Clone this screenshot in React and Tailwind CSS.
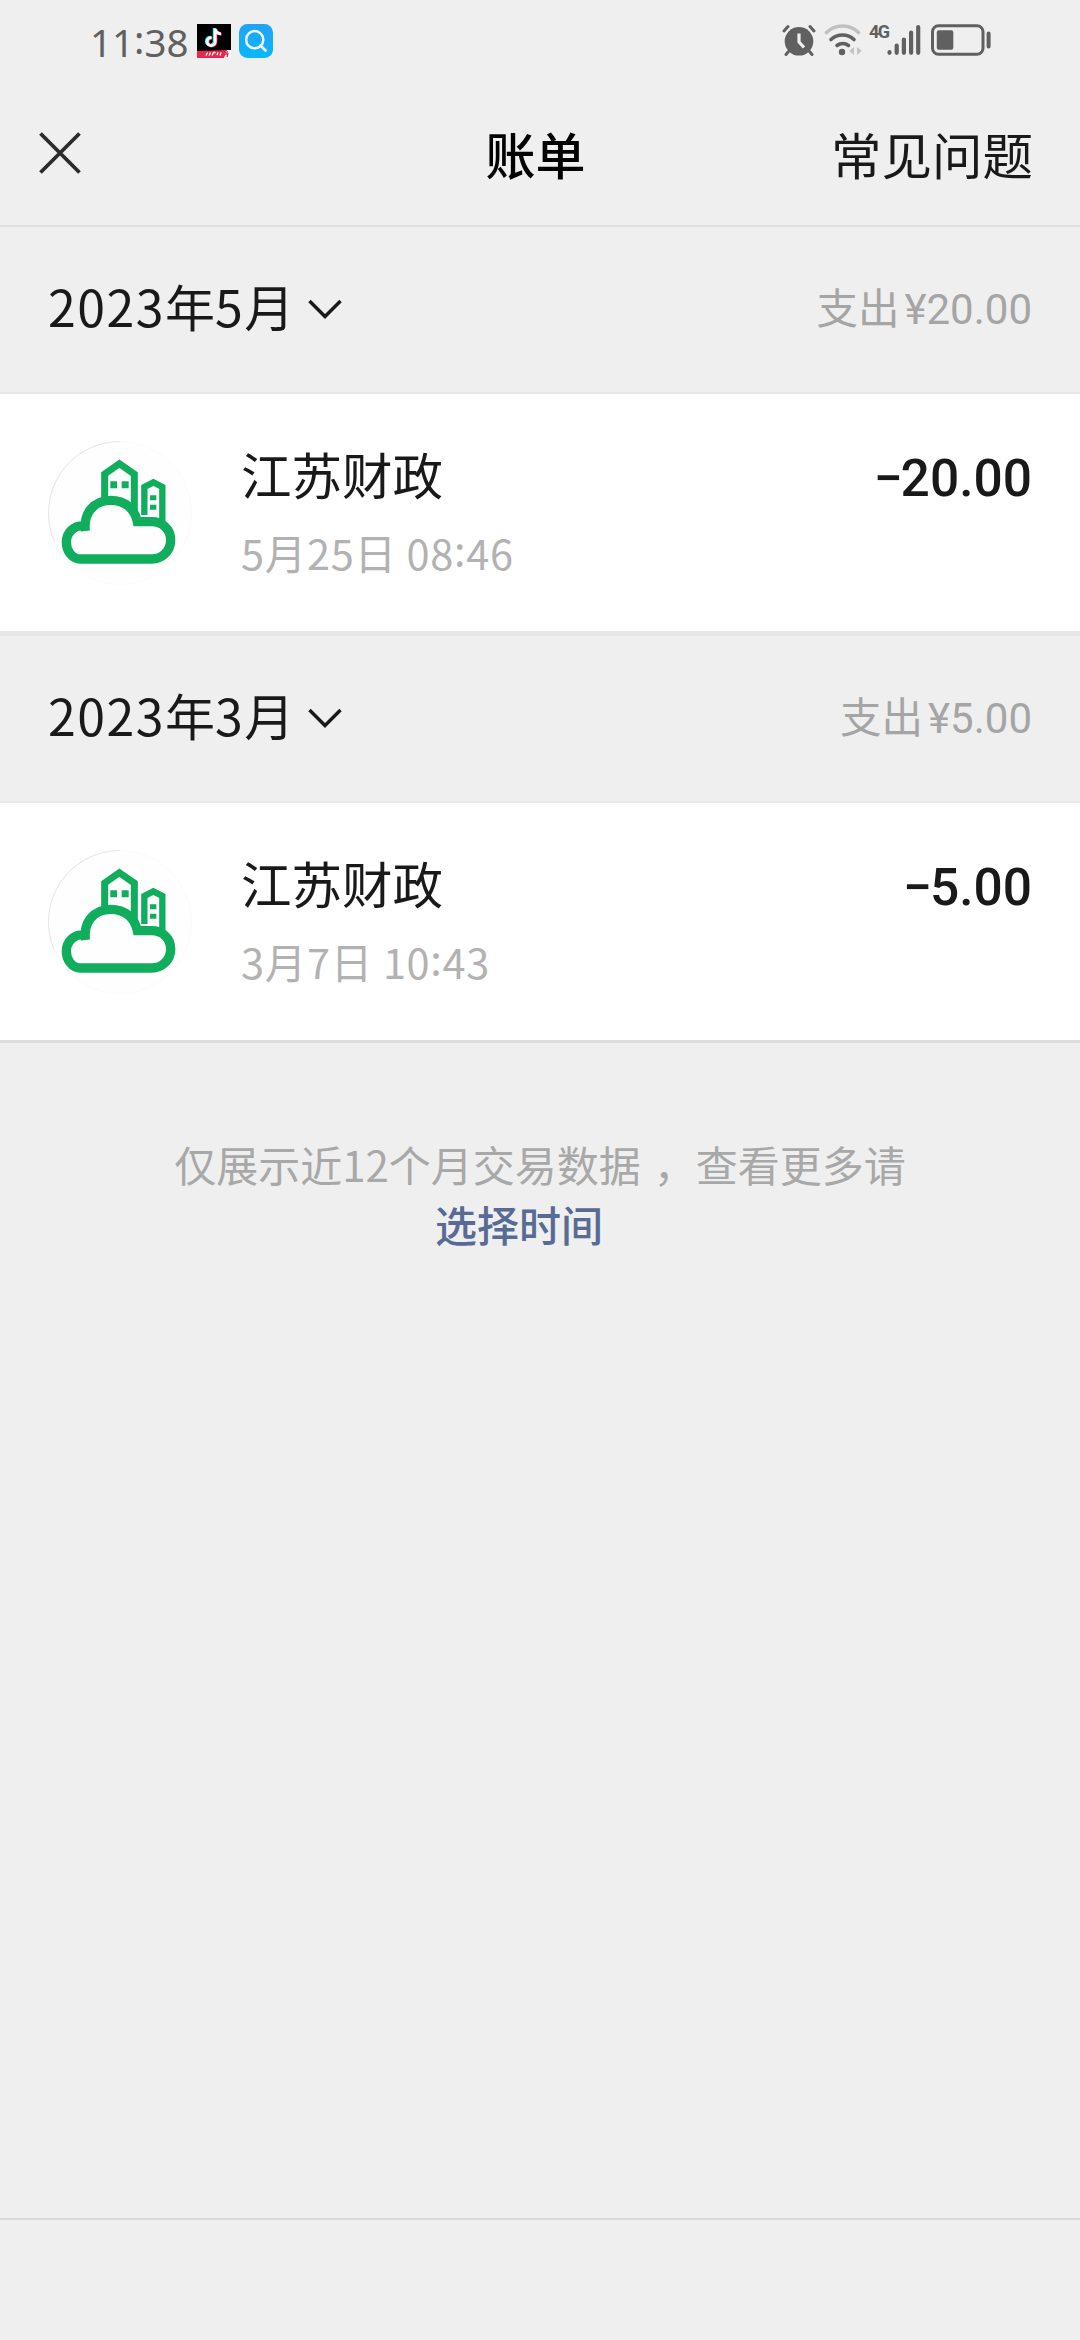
const months = [
  { year: "2023", month: "5", total: "20.00", title: "江苏财政", day: ["5", "25"], time: ["08", "46"], amount: "20.00" },
  { year: "2023", month: "3", total: "5.00", title: "江苏财政", day: ["3", "7"], time: ["10", "43"], amount: "5.00" },
];

function TikTokIcon() {
  return (
    <svg className="size-[34px]" viewBox="0 0 34 34">
      <rect width="34" height="34" fill="#000" />
      <g fill="none" strokeWidth="2.8">
        <path d="M17.2 4v13.2a4 4 0 1 1-3.6-4.1M17.2 4.5c.4 2.8 2.6 4.6 5.6 4.8" stroke="#25f4ee" />
        <path d="M19 5v13.2a4 4 0 1 1-3.6-4.1M19 5.5c.4 2.8 2.6 4.6 5.6 4.8" stroke="#fe2c55" />
        <path d="M18.2 4.5v13.2a4 4 0 1 1-3.6-4.1M18.2 5c.4 2.8 2.6 4.6 5.8 4.8" stroke="#fff" />
      </g>
      <path d="M0 27l34-1v8H0z" fill="#e8284f" />
      <path d="M27 34l3-8h4v8z" fill="#fff" />
      <path d="M9 31.5l1.5-3M12 31.5l1.5-3M15 31.5l1.5-3h2M20 31l1-2.500M23 31.500l1-3" stroke="#fff" strokeWidth="1.300" fill="none" />
      <path d="M31 27l-2 3h2l-1 3" stroke="#e8284f" strokeWidth="1.300" fill="none" />
    </svg>
  );
}

function SearchIcon() {
  return (
    <svg className="size-[34px]" viewBox="0 0 34 34">
      <defs>
        <linearGradient id="search-bg" x1="0" y1="0" x2="0" y2="1">
          <stop offset="0" stopColor="#22a2f6" />
          <stop offset="1" stopColor="#08b8fb" />
        </linearGradient>
      </defs>
      <rect width="34" height="34" rx="8.500" fill="url(#search-bg)" />
      <circle cx="15.700" cy="15.700" r="8.600" fill="none" stroke="#f4fbff" strokeWidth="2.500" />
      <path d="M21.500 21.500l5 5" stroke="#f4fbff" strokeWidth="2.600" strokeLinecap="round" />
    </svg>
  );
}

function AlarmIcon() {
  return (
    <svg className="h-8 w-[34px]" viewBox="0 0 34 32" fill="none" strokeLinecap="round">
      <path d="M6.500 27.500l-2.500 3M27.500 27.500l2.500 3" stroke="#606060" strokeWidth="3" />
      <circle cx="17" cy="17.300" r="14.300" fill="#606060" />
      <path d="M2 7l4-4.500M32 7l-4-4.500" stroke="#606060" strokeWidth="3" />
      <path d="M17 9.500v8.500l5 5.500" stroke="#efefef" strokeWidth="3.200" strokeLinecap="butt" />
    </svg>
  );
}

function WifiIcon() {
  return (
    <svg className="h-8 w-[38px]" viewBox="0 0 38 32" fill="none" strokeLinecap="round">
      <path d="M2.500 8.500a23 23 0 0 1 32 0" stroke="#c0c0c0" strokeWidth="3.600" />
      <path d="M7 15.500a17 17 0 0 1 23 0" stroke="#606060" strokeWidth="3.600" />
      <path d="M13 21.500a9.500 9.500 0 0 1 11.500 0" stroke="#606060" strokeWidth="3.600" />
      <circle cx="18" cy="28" r="3.200" fill="#606060" />
      <path d="M30 23v8l-4.800-4zM33 23v8l4.800-4z" fill="#c4c4c4" />
    </svg>
  );
}

function SignalIcon() {
  return (
    <svg className="h-8 w-[34px]" viewBox="0 0 34 32" stroke="#606060" strokeWidth="4.200" strokeLinecap="round">
      <path d="M2.500 28.200v.6M9.700 21.500v7.300M16.900 15.500v13.300M24.100 8.500v20.300M31.200 3v25.800" />
    </svg>
  );
}

function BatteryIcon() {
  return (
    <svg className="h-8 w-[62px]" viewBox="0 0 62 32">
      <rect x="1.500" y="1.700" width="50.500" height="28.600" rx="6" fill="none" stroke="#606060" strokeWidth="3" />
      <rect x="5.800" y="6.200" width="16.500" height="19.600" rx="2" fill="#606060" />
      <rect x="55.600" y="7.500" width="4" height="17" rx="2" fill="#606060" />
    </svg>
  );
}

function CloudCityLogo() {
  return (
    <svg className="size-36" viewBox="54 63 432 432" fill="none">
      <circle cx="270" cy="279" r="214.500" fill="#fefefe" stroke="#f8f8f8" strokeWidth="2" />
      <path d="M72 362a214.500 214.500 0 0 1 198-297.500" stroke="#e6e6e6" strokeWidth="3" />
      <g stroke="#10ae5c">
        <path d="M224 240v-78l44-31 45 31v120" strokeWidth="21" />
        <path d="M343 285v-84l27-14 27 14v105" strokeWidth="19" />
        <path
          d="M166 333c-6-50 22-92 76-92 44 0 72 26 80 64h44c28 0 56 20 56 55s-28 57-56 57H152c-26 0-43-24-43-50 0-29 22-50 50-50h12"
          strokeWidth="28"
        />
      </g>
      <g fill="#10ae5c">
        <path d="M241 184h20v21h-20zM275 184h21v21h-21zM360 226h19v15h-19zM360 254h19v15h-19z" />
      </g>
    </svg>
  );
}

function StatusBar() {
  return (
    <div className="flex h-20 items-start justify-between pt-6 pr-[87px] pl-[90px]">
      <div className="flex items-start">
        <span className="w-[107px] font-['Noto_Sans','Liberation_Sans',sans-serif] text-[38.500px] leading-9 text-[#606060]">
          11<span className="relative -top-[3px]">:</span>38
        </span>
        <TikTokIcon />
        <span className="w-2" />
        <SearchIcon />
      </div>
      <div className="flex items-start">
        <AlarmIcon />
        <span className="w-2" />
        <WifiIcon />
        <span className="ml-[7px] w-[18px] font-['Roboto',sans-serif] text-[18px] leading-4 font-bold tracking-[-1.500px] text-[#606060]">
          4G
        </span>
        <SignalIcon />
        <span className="w-[10px]" />
        <BatteryIcon />
      </div>
    </div>
  );
}

function Header() {
  return (
    <header className="flex h-[147px] items-start border-b-2 border-[#e0e0e0] pt-[38px] pr-[47px] pl-[38px]">
      <div className="flex-1 pt-[13px]">
        <svg className="size-11" viewBox="0 0 44 44" stroke="#2b2b2b" strokeWidth="3.800">
          <path d="M2.500 2.500l39 39M41.500 2.500l-39 39" />
        </svg>
      </div>
      <h1 className="text-[50px] leading-[70px] font-medium text-black">账单</h1>
      <div className="flex-1 text-right text-[50.500px] leading-[70px]">常见问题</div>
    </header>
  );
}

function MonthHeader({ year, month, total }) {
  return (
    <div className="flex h-[165px] items-center justify-between pr-12 pl-12">
      <div className="flex items-center text-[50px] leading-[70px]">
        <span className="pb-[9px]">
          <span className="tracking-[1.500px]">{year}</span>年<span className="tracking-[1.500px]">{month}</span>月
        </span>
        <svg className="mb-[2px] ml-[13px] h-5 w-9" viewBox="0 0 36 20" fill="none" stroke="#191919" strokeWidth="3.500">
          <path d="M2.500 2l15.500 15.500L33.500 2" />
        </svg>
      </div>
      <div className="flex items-baseline pb-1 text-[41.500px] leading-[60px] text-[#a5a5a5]">
        支出
        <span className="ml-[5px] font-['Roboto',sans-serif] text-[42px]">¥{total}</span>
      </div>
    </div>
  );
}

function BillRow({ title, day, time, amount }) {
  return (
    <div className="flex h-[237px] bg-white pt-[47px] pr-12 pl-12">
      <CloudCityLogo />
      <div className="-mt-[3px] ml-[49px] flex-1">
        <div className="text-[50.500px] leading-[70px]">{title}</div>
        <div className="mt-[14px] text-[41.500px] leading-[60px] tracking-[0.700px] text-[#b2b2b2]">
          {day[0]}月{day[1]}日 {time[0]}
          <span className="relative -top-1">:</span>
          {time[1]}
        </div>
      </div>
      <div className="mt-[2px] font-['Roboto',sans-serif] text-[51.500px] leading-[72px] font-medium">
        <span className="-mr-[2px]">−</span>
        {amount}
      </div>
    </div>
  );
}

export default function App() {
  return (
    <div className="flex h-[2340px] w-[1080px] flex-col overflow-hidden bg-[#efefef] font-['Noto_Sans_CJK_SC',sans-serif] text-[#191919]">
      <StatusBar />
      <Header />
      {months.map((item, i) => (
        <section
          key={item.month}
          className={i === 0 ? "border-b-[5px] border-[#e7e7e7]" : "border-b-[3px] border-[#dddddd]"}
        >
          <MonthHeader {...item} />
          <div className="border-t-2 border-[#e7e7e7]">
            <BillRow {...item} />
          </div>
        </section>
      ))}
      <div className="pt-[91px] text-center text-[42px] leading-[60px] text-[#a8a8a8]">
        <div>
          仅展示近12个月交易数据<span className="ml-[13px]">，</span>查看更多请
        </div>
        <div className="pr-[42px] font-medium text-[#576b95]">选择时间</div>
      </div>
      <footer className="mt-auto h-[122px] border-t-2 border-[#dadada]" />
    </div>
  );
}
